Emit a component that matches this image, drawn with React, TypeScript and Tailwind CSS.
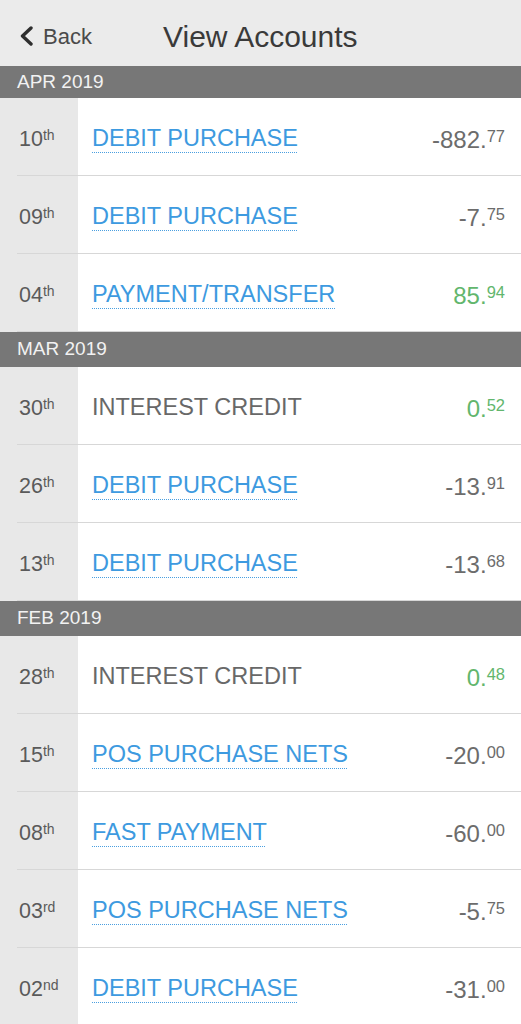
import React from "react";

type Tx = { day: string; suf: string; desc: string; link: boolean; whole: string; cents: string; pos?: boolean };
type Section = { label: string; headH: string; rows: Tx[] };

const sections: Section[] = [
  {
    label: "APR 2019",
    headH: "h-[32px]",
    rows: [
      { day: "10", suf: "th", desc: "DEBIT PURCHASE", link: true, whole: "-882.", cents: "77" },
      { day: "09", suf: "th", desc: "DEBIT PURCHASE", link: true, whole: "-7.", cents: "75" },
      { day: "04", suf: "th", desc: "PAYMENT/TRANSFER", link: true, whole: "85.", cents: "94", pos: true },
    ],
  },
  {
    label: "MAR 2019",
    headH: "h-[35px]",
    rows: [
      { day: "30", suf: "th", desc: "INTEREST CREDIT", link: false, whole: "0.", cents: "52", pos: true },
      { day: "26", suf: "th", desc: "DEBIT PURCHASE", link: true, whole: "-13.", cents: "91" },
      { day: "13", suf: "th", desc: "DEBIT PURCHASE", link: true, whole: "-13.", cents: "68" },
    ],
  },
  {
    label: "FEB 2019",
    headH: "h-[35px]",
    rows: [
      { day: "28", suf: "th", desc: "INTEREST CREDIT", link: false, whole: "0.", cents: "48", pos: true },
      { day: "15", suf: "th", desc: "POS PURCHASE NETS", link: true, whole: "-20.", cents: "00" },
      { day: "08", suf: "th", desc: "FAST PAYMENT", link: true, whole: "-60.", cents: "00" },
      { day: "03", suf: "rd", desc: "POS PURCHASE NETS", link: true, whole: "-5.", cents: "75" },
      { day: "02", suf: "nd", desc: "DEBIT PURCHASE", link: true, whole: "-31.", cents: "00" },
    ],
  },
];

function Row({ t }: { t: Tx }) {
  return (
    <div className="ml-[17px] h-[78px] pt-[6px] border-b border-[#d7d7d7] flex items-center">
      <div className="w-[75px] shrink-0 pl-[2px] text-[#5a5a5a] text-[21.5px] leading-none">
        {t.day}
        <span className="text-[14px] align-[6px]">{t.suf}</span>
      </div>
      <div className="flex-1 min-w-0">
        {t.link ? (
          <span className="text-[23.5px] leading-none text-[#3d9ae0] underline decoration-dotted decoration-1 underline-offset-[6px] decoration-[#4a9fe0]">
            {t.desc}
          </span>
        ) : (
          <span className="text-[23.5px] leading-none text-[#686868]">{t.desc}</span>
        )}
      </div>
      <div className={`pr-[16px] text-[24px] leading-none whitespace-nowrap ${t.pos ? "text-[#62b66d]" : "text-[#6c6c6c]"}`}>
        {t.whole}
        <span className="text-[16.5px] align-[6px]">{t.cents}</span>
      </div>
    </div>
  );
}

export default function App() {
  return (
    <div
      className="w-[521px] h-[1024px] overflow-hidden bg-white"
      style={{ fontFamily: '"Liberation Sans", Arial, sans-serif' }}
    >
      <div className="h-[66px] pt-[6px] bg-[#ebebeb] flex items-center">
        <div className="flex items-center pl-[19px] w-[163px]">
          <svg width="15" height="20" viewBox="0 0 15 20" className="mr-[9px]">
            <polyline points="12,2 3.5,10 12,18" fill="none" stroke="#2e2e2e" strokeWidth="3.4" strokeLinecap="round" strokeLinejoin="round" />
          </svg>
          <span className="text-[22px] text-[#4a4a4a]">Back</span>
        </div>
        <span className="text-[30px] text-[#3a3a3a]">View Accounts</span>
      </div>
      {sections.map((s) => (
        <div key={s.label}>
          <div className={`${s.headH} bg-[#777777] flex items-center pl-[17px] text-[19px] text-[#f2f2f2]`}>
            {s.label}
          </div>
          <div className="bg-[linear-gradient(to_right,#e8e8e8_78px,#ffffff_78px)]">
            {s.rows.map((t, i) => (
              <Row key={i} t={t} />
            ))}
          </div>
        </div>
      ))}
    </div>
  );
}
